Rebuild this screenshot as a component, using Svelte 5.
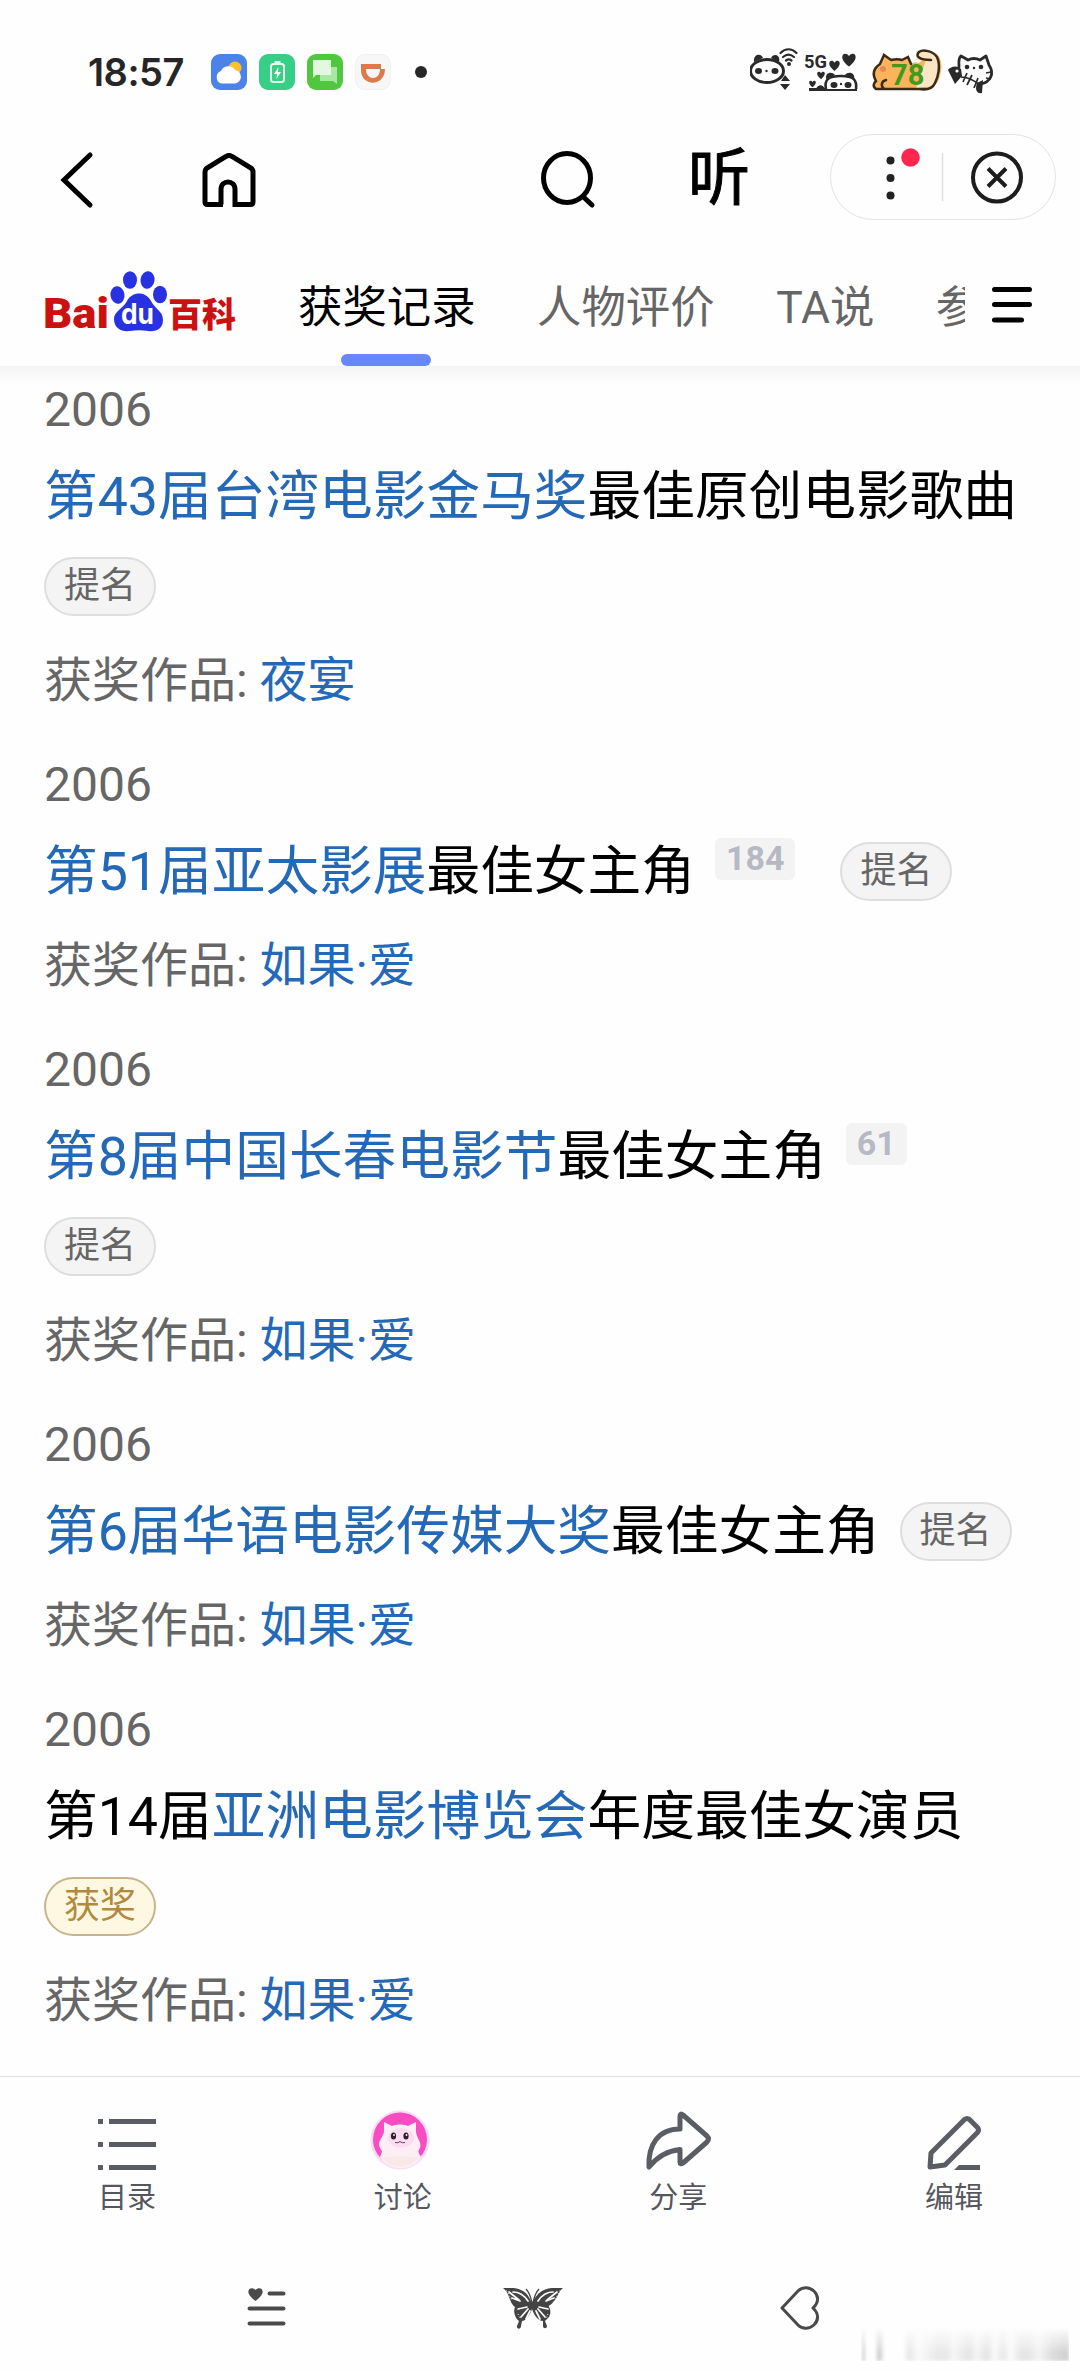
<script>
  const tabs = ['获奖记录', '人物评价', 'TA说', '参'];
  const awards = [
    { parts: [['第43届台湾电影金马奖', true], ['最佳原创电影歌曲', false]], ref: '', tag: '提名', work: '夜宴' },
    { parts: [['第51届亚太影展', true], ['最佳女主角', false]], ref: '184', tag: '提名', work: '如果·爱' },
    { parts: [['第8届中国长春电影节', true], ['最佳女主角', false]], ref: '61', tag: '提名', work: '如果·爱' },
    { parts: [['第6届华语电影传媒大奖', true], ['最佳女主角', false]], ref: '', tag: '提名', work: '如果·爱' },
    { parts: [['第14届', false], ['亚洲电影博览会', true], ['年度最佳女演员', false]], ref: '', tag: '获奖', work: '如果·爱' }
  ];
  // left, top and scale of the small hearts above the 5G panda
  const hearts = [[92, 7, 1.4], [79, 14, 1.1], [67, 25, 0.8], [59, 34, 0.7]];
</script>

<div class="screen">
  <header>
    <div class="status">
      <span class="time">18:57</span>
      <div class="apps">
        <svg width="36" height="36" viewBox="0 0 36 36">
          <rect width="36" height="36" rx="9" fill="#4c83e8" />
          <circle cx="24" cy="14" r="6.500" fill="#fbc02f" />
          <path d="M11 29.500a6.500 6.500 0 0 1-1-12.500 8 8 0 0 1 14-1 6.800 6.800 0 0 1 0 13.500z" fill="#fff" />
        </svg>
        <svg width="36" height="36" viewBox="0 0 36 36">
          <rect width="36" height="36" rx="9" fill="#37cf85" />
          <rect x="12" y="10" width="13" height="18" rx="2.500" fill="none" stroke="#e4fff0" stroke-width="2" />
          <path d="M15.500 8h6" stroke="#e4fff0" stroke-width="2" />
          <path d="M19.500 13l-4.500 7h3l-.5 5 4.500-7h-3z" fill="#fff" />
        </svg>
        <svg width="36" height="36" viewBox="0 0 36 36">
          <rect width="36" height="36" rx="9" fill="#4fc83f" />
          <path d="M13 13h17v17l-4-3H13z" fill="#a9e8a2" />
          <path d="M6 6h18v15H9l-3 3z" fill="#e2f8df" />
        </svg>
        <svg width="36" height="36" viewBox="0 0 36 36">
          <rect x=".5" y=".5" width="35" height="35" rx="9" fill="#f8f7f7" stroke="#f3f2f2" />
          <path d="M6 10h20v5H11c0 12 14 12 14 0h5c0 18-24 18-24 1z" fill="#dd7a4c" />
        </svg>
      </div>
      <span class="dot"></span>
      <svg class="pets" width="250" height="50" viewBox="0 0 250 50">
        <g fill="none" stroke="#2a2a2a" stroke-width="3" stroke-linecap="round">
          <ellipse cx="17" cy="24" rx="16.500" ry="11.500" />
          <path d="M30.500 6c5-5 11-5 16 0M33 10c3.500-3 7.500-3 11 0M36 13.500c2-1.500 3.500-1.500 5.500 0" stroke-width="2.200" />
        </g>
        <g fill="#2a2a2a">
          <path d="M4 15c-1-9 8-9 9-4zM21 11c2-5 10-4 8 4z" />
          <ellipse cx="8.500" cy="24" rx="3.500" ry="3" /><ellipse cx="25" cy="24" rx="3.500" ry="3" /><circle cx="16.500" cy="24" r="1.200" />
          <circle cx="39" cy="17" r="2" />
          <path d="M31 34l4-6 5 6zM30 37h10l-5 6z" />
          {#each hearts as [x, y, s]}
            <path d="M5 9C-4 2 2-3 5 1.500 8-3 14 2 5 9z" transform="translate({x} {y}) scale({s})" />
          {/each}
          <path d="M59 41h48v3H59zM76 32c-1-7 6-8 9-4zM95 28c3-4 11-3 9 5zM66 42c2-5 7-5 9 0z" />
        </g>
        <path d="M76 42c-2-9 2-13 15-13s16 4 15 13" fill="#fff" stroke="#2a2a2a" stroke-width="2.600" />
        <ellipse cx="84" cy="38" rx="3.500" ry="3" fill="#2a2a2a" /><ellipse cx="98" cy="38" rx="3.500" ry="3" fill="#2a2a2a" /><circle cx="91" cy="37" r="1.200" fill="#2a2a2a" />
        <text x="54" y="20.500" class="net" textLength="23" lengthAdjust="spacingAndGlyphs">5G</text>
        <path d="M126 42c-4-3-2-6 0-8-4-7-2-13 4-17l4-9 7 5c4-1 8-1 11 0l6-3 3 7c3-2 5-2 8-1l3-3c-4-6 1-10 9-8 11 2 12 13 9 24-2 9-8 12-16 12z" fill="#fbb45c" />
        <path d="M176 13h-10V4c19-4 25 6 22 22-1 11-5 15-22 15z" fill="#fbe6c4" />
        <path d="M126 42c-4-3-2-6 0-8-4-7-2-13 4-17l4-9 7 5c4-1 8-1 11 0l6-3 3 7M181 13c-12 0-16-4-12-8 4-3 14-1 18 5 4 9 1 20-2 26-3 7-10 7-16 6M126 42h50M134 42c-4-4-2-8 2-9" fill="none" stroke="#3a2a18" stroke-width="2.500" stroke-linecap="round" />
        <circle cx="133" cy="22" r="3" fill="#e98958" />
        <text x="141" y="38" class="level">78</text>
        <path d="M209 20c0-4-1-9 2-11l7 4c4-2 8-2 12 0l6-4 3 9c6 9 1 17-8 19" fill="none" stroke="#2a2a2a" stroke-width="2.800" stroke-linecap="round" stroke-linejoin="round" />
        <g fill="#2a2a2a">
          <circle cx="217" cy="20" r="2.300" /><circle cx="231" cy="20" r="2.300" /><circle cx="224" cy="21" r="1.200" />
          <path d="M198 23c3-4 9-5 13-1l1 7-7 8-3-6zM227 36l6-3-1 13c-6 1-7-4-5-10z" />
          <circle cx="207" cy="24" r="1.600" fill="#fff" />
        </g>
        <path d="M211 30c8 0 14 4 19 8M217 26l-4 9M222 28l-5 10M228 31l-4 10M236 26l5-1M236 31l5 1" fill="none" stroke="#2a2a2a" stroke-width="1.700" />
      </svg>
    </div>

    <div class="toolbar">
      <svg class="back" width="36" height="60" viewBox="0 0 36 60"><path d="M32 5L6 30l26 25" fill="none" stroke="#000" stroke-width="5" stroke-linecap="round" stroke-linejoin="miter" /></svg>
      <svg class="home" width="60" height="60" viewBox="0 0 60 60"><path d="M24 54.500H8.500q-2.500 0-2.500-2.500V22q0-2.500 2-4L27 6.500q3-2 6 0L52 18q2 1.500 2 4v30q0 2.500-2.500 2.500H36V39.500c0-10-14-10-14 0v15" fill="none" stroke="#000" stroke-width="5" /></svg>
      <svg class="search" width="60" height="62" viewBox="0 0 60 62"><ellipse cx="29" cy="30" rx="23.500" ry="24.500" fill="none" stroke="#000" stroke-width="5" /><path d="M45.500 49l8.500 8" stroke="#000" stroke-width="5" stroke-linecap="round" /></svg>
      <span class="listen">听</span>
      <div class="capsule">
        <svg width="226" height="86" viewBox="0 0 226 86">
          <g fill="#222"><circle cx="59.500" cy="25.500" r="4" /><circle cx="59.500" cy="43" r="4" /><circle cx="59.500" cy="60.500" r="4" /></g>
          <circle cx="79.500" cy="22.500" r="9.300" fill="#ff274d" />
          <path d="M111.500 18v48" stroke="#ddd" stroke-width="1.500" />
          <circle cx="166" cy="42.500" r="24" fill="none" stroke="#1d1d1d" stroke-width="4" />
          <path d="M157 33.500l18 18m0-18l-18 18" stroke="#1d1d1d" stroke-width="4" />
        </svg>
      </div>
    </div>

    <nav class="tabs">
      <svg class="logo" width="200" height="66" viewBox="0 0 200 66">
        <text x="1" y="60" class="bai" textLength="66" lengthAdjust="spacingAndGlyphs">Bai</text>
        <g fill="#2932e1">
          <ellipse cx="75.500" cy="27" rx="7" ry="8.800" transform="rotate(-8 75.500 27)" />
          <ellipse cx="88" cy="12" rx="7" ry="8.800" />
          <ellipse cx="105.500" cy="12" rx="7" ry="8.800" transform="rotate(8 105.500 12)" />
          <ellipse cx="118" cy="26.500" rx="7" ry="8.800" />
          <path d="M85 33c5-10 19-10 24 0 4 8 12 10 12 19s-7 12-15 11c-6-1-12-1-18 0-9 1-16-3-16-12 0-8 9-10 13-18z" />
        </g>
        <text x="79" y="56" class="du" textLength="33" lengthAdjust="spacingAndGlyphs">du</text>
        <text x="126" y="58.500" class="bk" textLength="68" lengthAdjust="spacingAndGlyphs">百科</text>
      </svg>
      <div class="tablist">
        {#each tabs as tab, i}
          <span class="tab" class:active={i === 0}>{tab}</span>
        {/each}
      </div>
      <svg class="menu" width="44" height="40" viewBox="0 0 44 40"><path d="M4.500 4.500h35M4.500 19.500h35M4.500 35h27" stroke="#000" stroke-width="5" stroke-linecap="round" /></svg>
    </nav>
  </header>

  <main>
    {#each awards as a}
      <article>
        <div class="year">2006</div>
        <div class="title">
          <span class="name">{#each a.parts as [text, link]}<span class:link>{text}</span>{/each}</span>
          {#if a.ref}<span class="ref">{a.ref}</span>{/if}
          <span class="tag" class:won={a.tag === '获奖'}>{a.tag}</span>
        </div>
        <div class="work">获奖作品: <span class="link">{a.work}</span></div>
      </article>
    {/each}
  </main>

  <footer>
    <div class="action">
      <svg width="64" height="64" viewBox="0 0 64 64"><path d="M3 14.500h5M3 37.500h5M3 60.500h5M14 14.500h47M14 37.500h47M14 60.500h47" stroke="#5b5d65" stroke-width="5" /></svg>
      <span>目录</span>
    </div>
    <div class="action">
      <svg class="avatar" width="64" height="64" viewBox="0 0 64 64">
        <circle cx="32" cy="33" r="29.500" fill="#fbdcf3" /><circle cx="32" cy="32.500" r="27" fill="#f84cc2" />
        <path d="M12 50c2-5 3-5 0-9-3-6 2-9 4-16l0-10 8 4c5-2 11-2 16 0l8-4 0 10c1 7 6 10 4 16-3 4-1 5 1 9-8 15-33 15-41 0z" fill="#fdeef6" />
        <path d="M14 49c8 4 12-3 18 1 6-4 10 3 18-1-6 14-30 14-36 0z" fill="#f8e9e6" />
        <ellipse cx="33" cy="31" rx="13" ry="10" fill="#fddcf1" />
        <ellipse cx="25.500" cy="29" rx="2.600" ry="3.600" fill="#2d2029" /><ellipse cx="38" cy="29" rx="2.600" ry="3.600" fill="#2d2029" />
        <circle cx="26" cy="28" r=".9" fill="#fff" /><circle cx="38.500" cy="28" r=".9" fill="#fff" />
        <path d="M27 35.500q3 1 5-1 2 2 5 1" fill="none" stroke="#6a3e57" stroke-width="1" />
      </svg>
      <span>讨论</span>
    </div>
    <div class="action">
      <svg width="68" height="64" viewBox="0 0 68 64"><path d="M36 9.500q0-4 3-1.500L63 29q3 3 0 6L39 56q-3 2-3-1V42.500C22 44 13 50 5 60 4 38 14 22 36 22z" fill="none" stroke="#5b5d65" stroke-width="5" stroke-linejoin="round" /></svg>
      <span>分享</span>
    </div>
    <div class="action">
      <svg width="64" height="64" viewBox="0 0 64 64"><path d="M8 60l1-14L42.500 12.500q2.500-2 5 0l8 8q2 2.500 0 5L23 58z" fill="none" stroke="#5b5d65" stroke-width="5" stroke-linejoin="round" /><path d="M32 63l5-5h21v5z" fill="#5b5d65" /></svg>
      <span>编辑</span>
    </div>
  </footer>

  <div class="system">
    <svg width="40" height="44" viewBox="0 0 40 44"><path d="M8.500 15C-5 5 4-1 8.500 4 13-1 22 5 8.500 15z" fill="#4a4a4a" /><path d="M22.500 7.500h14M2.500 22.500h34M2.500 37.500h34" stroke="#4a4a4a" stroke-width="4" stroke-linecap="round" /></svg>
    <svg width="62" height="46" viewBox="13 17 62 46">
      <path d="M14 20c7 0 14-1 20 3 5 3 7 8 9 12 2-4 5-9 10-12 6-4 13-3 21-3-5 4-5 10-10 14-1 3-5 3-4 5 2 3 2 8-1 11l-3 3 2 5c0 3-4 3-4 0l0-5c-5 0-9-6-11-12-2 6-6 12-10 12l-1 5c0 4-5 3-4 0l2-5c-4-3-6-9-4-14-6-4-5-14-12-19z" fill="#444" />
      <path d="M43 35c-1-5-2-10-6-14M44 35c1-5 2-10 6-14" fill="none" stroke="#444" stroke-width="1.300" />
      <path d="M24 24c6 0 11 3 15 9M20 24l10 8M23 30l8 3M64 24c-6 0-11 3-15 9M68 24l-10 8M65 30l-8 3M38 39l-9 2M39 41l-7 8M41 43l-4 8M50 39l9 2M49 41l7 8M47 43l4 8" fill="none" stroke="#fefefe" stroke-width="1.700" stroke-linecap="round" />
      <path d="M17.500 22.500l5 9M71 22.500l-5 9M29 46l2 4M59 46l-2 4" fill="none" stroke="#fefefe" stroke-width="1" stroke-dasharray="1 2" />
    </svg>
    <svg width="44" height="48" viewBox="0 0 44 48"><path d="M4 24L20 7c10-10 28 5 15 17 13 12-5 27-15 17z" fill="none" stroke="#4a4a4a" stroke-width="3" stroke-linejoin="round" /></svg>
  </div>
  <div class="haze" aria-hidden="true"></div>
</div>

<style>
  :global(body) { margin: 0; background: #fff; }
  .screen { width: 1080px; height: 2373px; display: flex; flex-direction: column; position: relative; overflow: hidden; background: #fefefe; font-family: Roboto, "Noto Sans CJK SC", sans-serif; color: #000; }
  svg { display: block; flex: none; }
  header { height: 366px; flex: none; position: relative; }
  header::after { content: ''; position: absolute; left: 0; right: 0; top: 366px; height: 20px; background: linear-gradient(#f4f4f4, #fefefe); }
  .status { height: 100px; padding: 44px 80px 0 88px; display: flex; align-items: center; box-sizing: border-box; }
  .time { font: 600 38px/44px Inter, sans-serif; letter-spacing: -.5px; width: 123px; color: #262626; }
  .apps { display: flex; gap: 12px; }
  .dot { width: 12px; height: 12px; border-radius: 50%; background: #262626; margin-left: 24px; }
  .pets { margin-left: auto; }
  .net { font: 700 19px Roboto, sans-serif; fill: #2a2a2a; }
  .level { font: 700 29px Roboto, sans-serif; fill: #3f9a1e; }
  .toolbar { height: 154px; display: flex; align-items: center; padding: 0 24px 0 58px; box-sizing: border-box; }
  .back { margin-top: 5px; }
  .home { margin: 5px 0 0 105px; }
  .search { margin: 3px 0 0 279px; }
  .listen { font-size: 62px; line-height: 80px; margin: 4px 0 0 90px; -webkit-text-stroke: 1px #000; }
  .capsule { width: 224px; height: 84px; border: 1px solid #e4e4e4; border-radius: 43px; margin-left: auto; overflow: hidden; }
  .tabs { height: 112px; padding-top: 14px; box-sizing: border-box; display: flex; }
  .logo { margin-left: 42px; overflow: visible; }
  .bai, .bk { font: 900 43px Roboto, "Noto Sans CJK SC", sans-serif; fill: #cc1111; }
  .bk { font-size: 34px; }
  .du { font: 700 29px Inter, sans-serif; fill: #fff; }
  .tablist { display: flex; gap: 61.500px; width: 667px; margin-left: 56px; overflow: hidden; white-space: nowrap; }
  .tab { font-size: 44.400px; line-height: 80px; color: #666; position: relative; }
  .tab.active { color: #000; }
  .tab.active::after { content: ''; position: absolute; left: 43px; width: 90px; top: 86px; height: 12px; border-radius: 6px; background: #6688fa; }
  .menu { margin: 17px 0 0 25px; }
  main { flex: none; height: 1710px; padding: 8px 44px 0; box-sizing: border-box; }
  article { margin-bottom: 32px; }
  .year { font-size: 48px; line-height: 72px; color: #666; }
  .title { display: flex; flex-wrap: wrap; column-gap: 20px; font-size: 53.700px; margin-top: 6px; }
  .name { line-height: 90px; white-space: nowrap; }
  .link { color: #2468b8; }
  .ref { height: 42px; padding: 0 11px; margin: 11px 25px 0 0; border-radius: 6px; background: #f3f3f4; color: #b6b9c3; font-size: 34px; line-height: 40px; font-weight: 700; }
  .tag { height: 55px; margin: 15px 0 16px; padding: 0 18px; border: 2px solid #dedede; border-radius: 30px; background: #f4f4f4; color: #666; font-size: 36px; line-height: 54px; }
  .tag.won { border-color: #c8b48c; background: #fef8e3; color: #b18a3e; }
  .work { font-size: 48px; line-height: 72px; margin-top: 13px; color: #666; }
  footer { height: 160px; flex: none; border-top: 1px solid #e3e3e3; display: flex; justify-content: space-between; padding: 30px 76px 0 77px; box-sizing: border-box; }
  .action { width: 100px; display: flex; flex-direction: column; align-items: center; }
  .action span { font-size: 29px; line-height: 44px; margin-top: 5px; color: #55575f; }
  .avatar { margin-left: -5px; }
  .system { display: flex; justify-content: space-between; align-items: center; padding: 48px 258px 0 247px; }
  .haze {
    position: absolute; right: 11px; bottom: 12px; width: 208px; height: 34px; filter: blur(1.500px);
    background: linear-gradient(90deg, #fefefe 0, #ccc 3px, #fefefe 5px 14px, #ccc 18px, #fefefe 24px 42px, #e8e8e8 48px, #fafafa 58px, #e9e9e9 76px 86px, #f6f6f6 92px, #e4e4e4 108px, #f4f4f4 116px, #e4e4e4 126px, #fafafa 134px, #e8e8e8 142px, #fafafa 150px, #e6e6e6 160px 168px, #f4f4f4 178px, #dcdcdc 192px, #d2d2d2 206px);
    -webkit-mask-image: linear-gradient(transparent, #000 75%);
  }
</style>
